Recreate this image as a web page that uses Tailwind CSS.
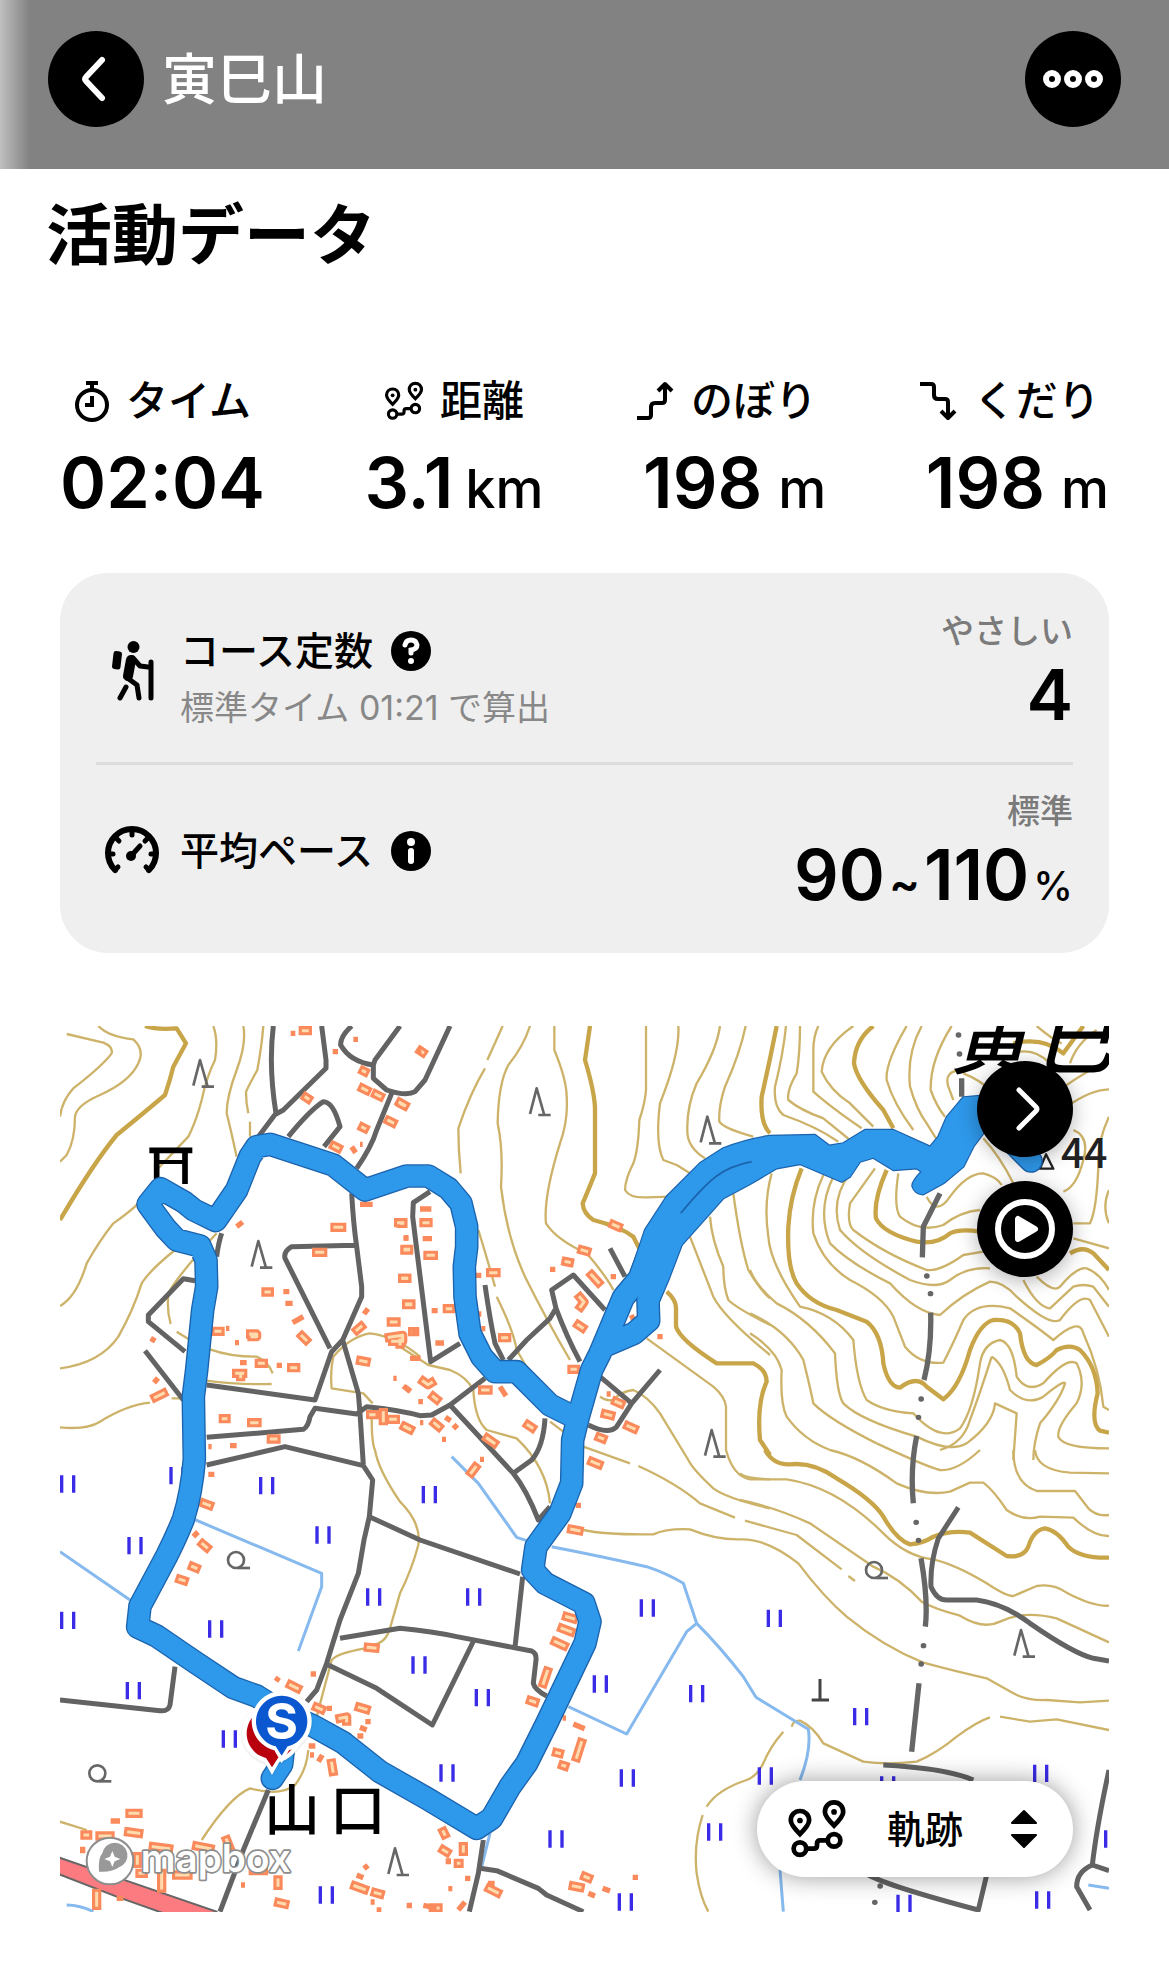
<!DOCTYPE html>
<html lang="ja">

<head>
    <meta charset="UTF-8">
    <meta name="viewport" content="width=device-width, initial-scale=1.0">
    <script src="https://cdn.jsdelivr.net/npm/@tailwindcss/browser@4"></script>
    <title>寅巳山 - 活動データ</title>
</head>

<body class="bg-white text-black font-['Inter','Noto_Sans_CJK_JP',sans-serif]">
    <!-- shared icon -->
    <svg class="hidden" aria-hidden="true">
        <symbol id="route" viewBox="0 0 190 188">
            <g fill="none" stroke="currentColor" stroke-width="15">
                <path d="M41 37c-17 0-29 13-29 30 0 14 16 30 29 43 13-13 29-29 29-43 0-17-12-30-29-30z" />
                <path d="M149 10c-17 0-29 13-29 30 0 14 16 30 29 43 13-13 29-29 29-43 0-17-12-30-29-30z" />
                <circle cx="41" cy="156" r="20" />
                <circle cx="149" cy="130" r="20" />
                <path d="M61 156H84Q95 156 95 147V141Q95 130 106 130H129" />
            </g>
            <circle cx="41" cy="67" r="9" fill="currentColor" />
            <circle cx="149" cy="40" r="9" fill="currentColor" />
        </symbol>
    </svg>

    <header class="flex items-center justify-between px-12 pt-[31px] pb-[42px] bg-linear-to-r from-[#c0c0c0] via-[#828282] via-[30px] to-[#828282]">
        <div class="flex items-center gap-[18px]">
            <button type="button" aria-label="戻る" class="size-24 rounded-full bg-black text-white flex items-center justify-center">
                <svg class="size-12" viewBox="0 0 48 48" fill="none" stroke="currentColor" stroke-width="6" stroke-linecap="round" stroke-linejoin="round">
                    <path d="M30 5L14 22Q12 24 14 26L30 43" />
                </svg>
            </button>
            <span class="text-[55px] leading-[76px] font-medium text-white">寅巳山</span>
        </div>
        <button type="button" aria-label="メニュー" class="size-24 rounded-full bg-black text-white flex items-center justify-center">
            <svg class="w-[60px] h-5" viewBox="0 0 60 20" fill="none" stroke="currentColor" stroke-width="6">
                <circle cx="9" cy="10" r="6" />
                <circle cx="30" cy="10" r="6" />
                <circle cx="51" cy="10" r="6" />
            </svg>
        </button>
    </header>

    <main class="pb-[58px]">
        <h1 class="px-[46px] mt-8 text-[66px] leading-[68px] font-bold">活動データ</h1>

        <!-- stats -->
        <dl class="flex justify-between px-[60px] mt-[108px] font-medium">
            <div>
                <dt class="flex items-center justify-center gap-4 text-[42px] leading-[48px]">
                    <svg class="w-9 h-11" viewBox="0 0 36 44" fill="none" stroke="currentColor" stroke-width="4">
                        <circle cx="18" cy="26" r="15" />
                        <path d="M12 4H24M18 4V10M18 17V26H11" />
                    </svg>
                    タイム
                </dt>
                <dd class="mt-4 text-[70px] leading-[84px] font-semibold whitespace-nowrap">02:04</dd>
            </div>
            <div>
                <dt class="flex items-center justify-center gap-4 text-[42px] leading-[48px]">
                    <svg class="size-10"><use href="#route" /></svg>
                    距離
                </dt>
                <dd class="mt-4 text-[70px] leading-[84px] font-semibold whitespace-nowrap">3.1<span class="ml-3 text-[54px] leading-none font-medium">km</span></dd>
            </div>
            <div>
                <dt class="flex items-center gap-4 text-[42px] leading-[48px]">
                    <svg class="size-10 -ml-2" viewBox="0 0 40 40" fill="none" stroke="currentColor" stroke-width="4" stroke-linejoin="round">
                        <path d="M2 37H13Q16 37 16 34V26Q16 22 20 22H27Q30 22 30 19V4M23 10L30 3L37 10" />
                    </svg>
                    のぼり
                </dt>
                <dd class="mt-4 text-[70px] leading-[84px] font-semibold whitespace-nowrap">198<span class="ml-4 text-[54px] leading-none font-medium">m</span></dd>
            </div>
            <div>
                <dt class="flex items-center gap-4 text-[42px] leading-[48px]">
                    <svg class="size-10 -ml-2" viewBox="0 0 40 40" fill="none" stroke="currentColor" stroke-width="4" stroke-linejoin="round">
                        <path d="M2 3H13Q16 3 16 6V14Q16 18 20 18H27Q30 18 30 21V36M23 30L30 37L37 30" />
                    </svg>
                    くだり
                </dt>
                <dd class="mt-4 text-[70px] leading-[84px] font-semibold whitespace-nowrap">198<span class="ml-4 text-[54px] leading-none font-medium">m</span></dd>
            </div>
        </dl>

        <!-- course card -->
        <section class="mx-[60px] mt-12 px-9 bg-[#efefef] rounded-[48px]">
            <div class="flex items-center pt-[34px] pb-[27px] border-b-3 border-[#dcdcdc]">
                <div class="w-[84px] pl-4">
                    <svg class="w-[42px] h-[60px]" viewBox="0 0 42 60" fill="none" stroke="currentColor" stroke-linecap="round" stroke-linejoin="round">
                        <circle cx="21.5" cy="6" r="6" fill="currentColor" stroke="none" />
                        <path d="M4 12.500L7.500 13L6 26L2.500 25.500Z" fill="currentColor" stroke-width="5" />
                        <path d="M19 19L16 35" stroke-width="10" />
                        <path d="M21 17L28 25L36 26" stroke-width="5" />
                        <path d="M39 21V57M14 36L25 44L27 57M14 46L8 57" stroke-width="5" />
                    </svg>
                </div>
                <div class="self-end">
                    <h2 class="flex items-center gap-[18px] text-[39px] leading-[60px] font-medium">
                        コース定数
                        <button type="button" aria-label="コース定数とは" class="size-10 rounded-full bg-black text-white flex items-center justify-center">
                            <svg class="size-7" viewBox="0 0 28 28" fill="none" stroke="currentColor" stroke-width="5" stroke-linecap="round">
                                <path d="M8 8Q9 3 14 3T20 8Q20 12 14 13V16" />
                                <circle cx="14" cy="24" r="3" fill="currentColor" stroke="none" />
                            </svg>
                        </button>
                    </h2>
                    <p class="text-[34px] leading-[54px] text-[#888]">標準タイム 01:21 で算出</p>
                </div>
                <div class="ml-auto text-right font-medium">
                    <p class="text-[33px] leading-[48px] text-[#7b7b7b]">やさしい</p>
                    <p class="text-[70px] leading-[80px] font-semibold">4</p>
                </div>
            </div>
            <div class="flex items-center pt-[22px] pb-[38px]">
                <div class="w-[84px] pl-2">
                    <svg class="w-[56px] h-[50px]" viewBox="0 0 56 50" fill="none" stroke="currentColor" stroke-width="5" stroke-linecap="round">
                        <path d="M11 44A24 24 0 1 1 45 44" stroke-width="6" />
                        <path d="M28 6V9M13 13L15 15M43 13L41 15M5 28H9M51 28H47M11 44L14 41M45 44L42 41" />
                        <path d="M27 30L36 20" />
                        <circle cx="27" cy="30" r="5" fill="currentColor" stroke="none" />
                    </svg>
                </div>
                <h2 class="flex items-center gap-[18px] text-[39px] leading-[60px] font-medium">
                    平均ペース
                    <button type="button" aria-label="平均ペースとは" class="size-10 rounded-full bg-black text-white flex items-center justify-center">
                        <svg class="size-7" viewBox="0 0 28 28" fill="currentColor">
                            <circle cx="14" cy="5" r="4" />
                            <rect x="11" y="11" width="6" height="16" rx="3" />
                        </svg>
                    </button>
                </h2>
                <div class="ml-auto text-right font-medium">
                    <p class="text-[33px] leading-[48px] text-[#7b7b7b]">標準</p>
                    <p class="text-[70px] leading-[80px] font-semibold">90<span class="mx-1 text-[46px] leading-none">~</span>110<span class="ml-1 text-[40px] leading-none font-medium">%</span></p>
                </div>
            </div>
        </section>

        <!-- map -->
        <section class="relative mx-[60px] mt-[73px]">
            <svg class="block w-full" viewBox="0 0 3147 2658" fill="none" stroke-linejoin="round">
                <defs>
                    <path id="tree" d="M-20 82L0 5L22 82M5 85H42" stroke="#666" stroke-width="8" />
                    <path id="field" d="M-18 -26V26M18 -26V26" stroke="#3a2ce6" stroke-width="10" />
                    <g id="leaf" stroke="#666" stroke-width="8">
                        <circle r="24" />
                        <path d="M5 24H42" />
                    </g>
                    <path id="pin" d="M0 127L-22 88A90 90 0 1 1 22 88Z" />
                </defs>

                <!-- contours -->
                <g stroke="#cdb36a" stroke-width="7">
                    <g transform="translate(-30 -48)">
                        <path d="M50 72L160 98Q190 110 185 130Q160 165 70 235Q35 275 30 320M145 48Q175 80 250 88Q285 120 265 160Q240 215 150 255Q80 285 75 320Q75 390 50 435L30 455M490 48Q505 90 495 150Q470 200 455 270Q440 330 415 380L320 480M580 48Q590 100 560 180Q530 260 530 310Q545 370 560 440M640 48Q635 110 622 180Q600 220 588 245Q588 280 595 310M600 335V380" />
                        <path d="M265 580Q240 605 190 640Q150 690 110 760Q80 860 30 888M375 720Q300 780 275 820Q250 900 205 980Q150 1060 30 1075M500 670Q380 800 355 850Q350 900 362 942M380 965L420 990M480 1018Q540 1040 620 1040Q655 1055 668 1090M470 1112Q560 1125 665 1122M30 1252Q110 1260 150 1235Q230 1185 300 1178M365 1165H390" />
                        <path d="M1110 1040Q1040 980 960 970Q900 980 850 1040Q840 1080 845 1135L940 1150L968 1180M965 1220Q965 1300 975 1320Q985 1380 1050 1475Q1115 1540 1105 1605Q1085 1680 1050 1750L1020 1855Q1010 1890 985 1900L945 1915Q860 1930 845 1950L800 2120M775 2220Q770 2280 735 2325Q690 2360 600 2335Q540 2360 455 2490M30 2435L110 2460" />
                    </g>
                    <g transform="translate(1020 -48)">
                        <path d="M308 48L262 150M255 175Q210 250 175 355Q175 420 182 490M390 48Q370 110 325 165Q295 220 293 340Q310 420 303 530Q320 680 375 800Q440 930 510 1050M463 48V120Q500 210 500 260Q505 330 480 400Q430 560 438 640Q470 690 560 730Q620 800 640 840M235 660Q260 740 285 830M290 860Q340 960 350 1020L385 1080M738 48V240Q735 280 718 330Q715 420 700 460Q675 510 675 540Q690 565 740 562L810 560M835 48Q840 130 780 280Q765 400 790 450L830 465L870 490M960 48Q950 120 890 220Q860 290 862 360Q860 410 915 445M1037 48Q1020 130 975 230Q955 290 958 335Q970 355 1060 380" />
                        <path d="M870 680L940 860Q970 920 1110 1035M930 620Q935 690 970 770Q970 830 985 870Q1010 895 1110 945M1000 550Q1020 700 1045 780Q1080 840 1110 865M740 985L940 1130Q975 1160 978 1190V1320Q1000 1400 1050 1408H1110M0 1010L85 1065L150 1080Q200 1100 220 1140Q225 1230 260 1260L350 1285Q440 1370 450 1480M600 1160Q620 1175 640 1170Q660 1145 700 1140Q745 1160 780 1210L865 1350Q880 1380 940 1435Q980 1465 1110 1495M450 1235L490 1265M550 1310L690 1360" />
                        <path d="M715 1368Q830 1420 900 1480L1005 1523M550 1560Q620 1575 760 1573Q800 1555 870 1558Q950 1590 1020 1588M1150 2165Q1110 2210 1090 2260Q1070 2300 1040 2310Q950 2340 920 2390M908 2415Q880 2500 890 2590Q900 2660 925 2705" />
                    </g>
                    <g transform="translate(2070 -48)">
                        <path d="M108 48Q100 130 75 230Q70 290 100 315Q200 350 265 395M150 48Q150 130 140 190Q110 240 115 270Q150 300 220 325L300 390M205 48Q190 80 190 120V245Q240 290 335 355M310 48Q220 110 215 185Q240 240 300 280L370 350M470 48Q405 160 410 210Q430 280 490 360M515 48Q470 130 480 230Q500 300 530 340L558 385M605 48Q540 150 542 240Q560 290 585 320M640 180Q580 180 595 230L610 270M860 48Q910 90 935 100M790 130Q850 110 900 160M960 160Q980 100 1040 60M640 190Q690 210 720 240M950 225Q1000 190 1077 150" />
                        <path d="M65 490Q40 580 55 680Q60 760 150 890Q250 910 310 990Q320 1120 350 1170Q400 1205 490 1210Q570 1300 630 1255Q670 1200 690 1060Q700 1000 750 990Q790 1000 800 1100Q830 1150 880 1120Q950 1040 980 1060Q1010 1120 980 1180Q920 1250 925 1280Q940 1315 1077 1315" />
                        <path d="M220 495Q180 580 190 670Q220 760 300 810Q400 860 430 920L465 1010Q510 1065 580 1058Q610 1000 640 930Q680 870 780 895Q860 950 910 990Q990 920 1000 970Q1050 1080 1060 1190L1077 1200" />
                        <path d="M250 500Q200 600 240 700Q300 760 420 820Q500 910 570 915Q640 850 720 815Q760 815 800 860Q900 950 930 930Q990 850 1020 870L1077 980M300 490Q240 570 270 660Q330 730 480 810Q560 840 600 810Q650 770 720 775M375 475L300 580Q290 640 310 660Q400 730 530 780Q570 785 640 735L700 725M445 490Q430 590 450 620Q510 670 580 645Q630 605 690 600M530 560Q560 620 600 560Q650 490 700 490Q740 500 755 525" />
                        <path d="M700 385Q750 440 790 520M950 290Q1020 240 1077 238M970 360Q1020 380 1000 450Q980 530 940 545M1077 320Q1040 400 1045 470Q1040 600 1020 640H970M1077 540Q1055 590 1077 640M970 685L1077 715M820 810Q860 890 900 895L970 830Q1000 820 1030 830L1077 890M860 800Q910 850 930 830Q980 770 1010 775Q1050 790 1077 840" />
                        <path d="M0 780Q20 830 80 880Q180 930 255 1030Q260 1150 280 1180Q330 1230 500 1280Q600 1330 650 1300Q730 1240 735 1180L800 1210L790 1350M0 910Q110 960 160 1050Q180 1130 190 1180Q240 1230 380 1300M0 970Q80 1020 95 1080Q90 1180 110 1220Q160 1290 240 1320M725 1040Q760 1060 780 1140Q830 1190 880 1160Q940 1110 945 1120Q930 1170 870 1240Q850 1300 850 1350M725 1040Q690 1150 660 1230Q640 1300 570 1320" />
                    </g>
                    <g transform="translate(2040 1272)">
                        <path d="M0 70Q20 90 140 88Q290 110 430 250Q500 320 580 328Q650 345 740 400Q800 440 820 438L890 408Q940 400 980 428Q1060 470 1107 467M0 150Q100 170 210 220L400 350Q480 385 545 455Q580 475 660 497Q730 540 780 515Q850 480 950 505L1107 577M15 212L170 255L305 358M325 378L345 393M0 268Q80 265 175 340Q250 440 320 500Q430 590 550 638Q650 665 740 685L820 730Q860 752 920 750L1020 757L1107 752" />
                        <path d="M270 0Q360 20 470 100Q560 140 630 125L690 98H730Q760 120 800 180Q850 215 900 200L1000 203Q1060 260 1107 258M410 -20Q560 50 600 60Q650 65 720 0M820 0Q820 100 890 123H1005L1045 175Q1070 200 1107 195M885 0Q890 60 990 68L1107 70M155 830Q160 810 180 812Q220 830 250 880L370 935Q440 945 530 935Q590 910 650 860Q710 815 750 802M780 800L870 815L950 808L1107 840" />
                    </g>
                </g>
                <g stroke="#c8a548" stroke-width="13">
                    <path transform="translate(-30 -48)" d="M285 48Q320 60 380 55L408 100L370 170Q360 210 345 255Q280 310 200 375Q130 460 30 630" />
                    <path transform="translate(1020 -48)" d="M570 48L555 150Q585 250 585 300V490Q565 540 548 580Q550 610 580 630Q660 650 700 680L720 720M800 845Q830 870 828 900V950Q840 990 950 1060H1060Q1100 1080 1100 1115Q1070 1180 1080 1290L1110 1335" />
                    <path transform="translate(2070 -48)" d="M80 48Q60 150 35 260Q30 340 60 370M370 48Q315 90 312 160Q320 210 400 300L430 355M155 475Q120 560 115 650Q110 770 140 820Q180 880 260 900L350 935Q395 970 400 1060Q415 1130 450 1133Q500 1095 530 1130L580 1168Q630 1130 660 1020Q690 940 730 930Q790 925 810 970Q820 1060 860 1065Q900 1045 920 1020Q960 1000 990 1020Q1040 1070 1043 1150Q1020 1240 1050 1262L1077 1268M410 480Q370 570 378 625Q400 670 500 695Q560 705 600 670Q630 655 690 665M960 730Q1000 705 1030 730L1077 780M790 100Q880 80 940 130L1000 48" />
                    <path transform="translate(2040 1272)" d="M75 0Q100 45 150 43Q220 35 290 85Q400 150 430 200Q470 270 510 283Q550 280 580 260Q630 240 690 248L800 318Q850 325 865 290Q880 240 915 235Q950 240 985 290Q1020 325 1107 323" />
                </g>

                <!-- water -->
                <g stroke="#86b9ee" stroke-width="9">
                    <path transform="translate(-30 1272)" d="M430 207L815 370V410L745 603M30 305L240 450M50 1365Q90 1365 130 1385" />
                    <path transform="translate(1020 1272)" d="M155 20L235 100L350 262L380 272M455 290Q610 320 740 350Q800 370 850 400L890 520L860 545L680 852L505 770M890 520Q960 590 1030 680L1068 742L1225 838Q1235 900 1200 990M1140 1260L1150 1385M270 1150L245 1250M2065 1305L2127 1315" />
                </g>

                <!-- roads -->
                <path transform="translate(-30 1272)" d="M20 1220L150 1265L500 1385V1400H370L200 1340L20 1270Z" fill="#fb7b80" stroke="#666" stroke-width="6" />
                <g stroke="#636363" stroke-width="15">
                    <path transform="translate(-30 -48)" d="M670 48Q655 170 678 310L625 380M815 48L828 150V175L700 300L678 312M715 380Q780 300 820 275Q850 275 870 350L822 410M905 48Q870 80 872 105Q900 155 970 165L975 150L1050 48M970 165V205L1010 240Q1070 260 1095 245L1125 210L1200 48M1025 250L980 360Q965 410 920 475M905 550Q910 640 920 710L935 830V860L878 990L845 1025L795 1170L470 1125M915 706L725 710Q700 725 705 745L840 1015M878 990L925 1150L930 1210L940 1365M470 1282L760 1258Q775 1250 780 1220L795 1195L920 1212L950 1190Q1050 1200 1110 1217L1145 1215L1200 1185M515 670Q505 700 500 740M435 812L400 806L295 915V935L405 1025M285 1022L400 1170M470 1365L705 1310L940 1367L968 1410L958 1520L942 1590L925 1690L870 1830L830 1960L800 2040L770 2075" />
                    <path transform="translate(1020 -48)" d="M90 545L40 578L38 620L92 1055L180 1000M255 825Q270 930 285 1000L310 1050M325 1050L380 990L450 925L468 895L455 840L520 795L615 900M468 895Q500 980 540 1055M630 715L675 800M600 1100L695 1180L780 1080M695 1180L650 1250Q625 1275 565 1245M255 1105L150 1185L340 1390Q380 1440 415 1530L450 1490M435 1225Q430 1310 395 1350L340 1390" />
                    <path transform="translate(-30 1272)" d="M958 200L1110 270L1410 372M870 565L1050 535Q1150 545 1220 560L1445 603Q1460 610 1458 630L1450 700Q1455 720 1490 738M1418 380L1395 592M1272 570L1147 825L980 715L835 645M375 650L360 765Q355 785 330 782L30 750M655 1020L580 1200L510 1385M1300 1170L1285 1270L1258 1385M1290 1255L1340 1262L1465 1315L1490 1335L1600 1385" />
                    <path transform="translate(2040 1272)" d="M655 172L595 265Q570 340 573 410Q590 450 620 450H710Q790 460 870 520Q1000 610 1060 625L1107 633M430 945Q620 955 700 990M385 1275Q450 1310 715 1380L740 1275M1107 960Q1070 1130 1057 1245L1107 1262M1057 1245Q1010 1265 1010 1310L1050 1380" />
                </g>
                <!-- boundary -->
                <g stroke="#666" stroke-width="16">
                    <path d="M2640 502L2590 602L2587 694M2612 860Q2615 972 2592 1062M2570 1230Q2550 1330 2560 1432M2583 1597Q2605 1722 2596 1802M2577 1972L2555 2177M2705 157V212" />
                    <path stroke-linecap="round" d="M2600 750h1M2611 803h1M2583 1119h1M2575 1174h1M2695 27h1M2698 84h1M2568 1489h1M2575 1543h1M2590 1859h1M2583 1914h1M2444 2629h1M2460 2580h1" />
                </g>

                <!-- buildings: short strokes, light core drawn on top -->
                <defs>
                    <g id="houses">
                        <path transform="translate(-30 -48)" d="M760 62h12M768 262l6 4M940 183l4 2M938 235l12 6M978 253l12 6M1050 278l14 8M1016 332l12 6M938 352l6 3M852 408l12 6M855 652h20M1046 638h12M1066 718h10M800 727h18M1060 805h10M1070 882h12M648 846h10M498 964h12M602 972h18v8h-14M756 978l12 12M921 960l12-10M932 1052l16 3M1018 982l40-6v18h-30M560 1090h18M572 1094v6M628 1060h12M725 1073h12M316 1162l24-12M520 1226h8M605 1238h16M664 1287h14M962 1214h10M1000 1208v24M1022 1228h14M1068 1252l12 6M1024 936h14" />
                        <path transform="translate(1020 -48)" d="M4 282l8 4M62 123l6 4M4 640h4M72 638h12M15 720h10M84 736h16M8 805h12M20 884h12M142 896h10M38 965h6M0 990v12M308 983h12M272 788h16M640 644l14 6M546 720l14 4M498 755l10 2M575 795l20 22M540 862l12 14l-10 14M535 945l12 8M516 1078h10M70 1114l14 10l10-6M248 1140h16M384 1245l12 8M648 1175l14 6M616 1212l16 4M684 1248l18 8M598 1282l10 4M262 1285l20 14M100 1160l10 8M104 1240l12 10M14 1250l12 6M576 1355l20 8M214 1388l12-16M515 1558l22 4" />
                        <path transform="translate(-30 1272)" d="M462 160l16 6M458 282l12 10M428 350l10 4M390 388l12 4M955 592l20 2M722 705l20 10M800 772l14 6M870 805l20-4v12M928 772l20 6M845 940l4 24M240 1090h24M236 1146l30 4M105 1155h8M150 1158h30M310 1190l46 6M440 1188l40 8M530 1170l8 20M262 1220v20M270 1270h10M335 1270v44M140 1330v36M380 1275h34M610 1262h30M684 1290v16M686 1358l18 4M915 1308l28 10M976 1328l14 4" />
                        <path transform="translate(1020 1272)" d="M500 500l20 6M486 535l26 10M466 575l26 12M430 700l12-36M392 752l12 4M470 908l8 2M488 946l6 2M530 922l14-44M130 1145l4 8M130 1200l10 6M190 1190v14M268 1316l24 12M520 1308l20 4M555 1280l10 4M175 1240h2M100 1374h14" />
                    </g>
                </defs>
                <use href="#houses" stroke="#fa8a5c" stroke-width="28" stroke-linecap="square" />
                <use href="#houses" stroke="#ffdcae" stroke-width="9" stroke-linecap="square" />
                <g stroke="#fa8a5c" stroke-width="16">
                    <path transform="translate(-30 -48)" d="M722 70h14M910 88h14M848 125h16M1104 125h10M905 410l12 18M930 403h8M560 650l18-14M930 583h38M1062 684h14M700 845h18M706 880h22M728 938l32-18M942 912l12-16M555 998h12M528 955h10M570 1058h20M680 1066h16M302 985l14 8M312 1118l12-14M475 1310h10M540 1307h20M1030 1105h10M1064 1130l18 14M1084 1045h26M1084 964h16" />
                    <path transform="translate(1020 -48)" d="M60 597h34M68 686h28M10 684h14M450 778h16M632 800h16M772 980h16M95 902h18M106 999h26M30 1045h32M228 796h16M236 912h8M244 956h12M10 1128l20 16M55 1175h14M60 1238h10M136 1222l16 10M160 1256l12-12M126 1288h12M300 1130l18 28M690 925l14-6M620 1152h12M535 1478v16M240 1348h12" />
                    <path transform="translate(-30 1272)" d="M475 73h18M430 260l14-14M678 694l8-12M782 672h16M830 775h16M946 815h16M930 832l20 8M922 858h18M776 888h20M780 915h12M805 935l12-20M182 1113h28M200 1345h20M98 1190v20M573 1305h12M920 1275l20 8M942 1256l12-10M962 1356h12M980 1380h14M1070 1367h16" />
                    <path transform="translate(1020 1272)" d="M488 804h10M520 822l34 14M195 1285h16M145 1316h12M264 1300h20M565 1330l20 8M608 1315l22 8M698 1282h16M22 1366h14M70 1366l40 8M175 1380l20-24M145 1225v18" />
                </g>

                <!-- land use symbols -->
                <g>
                    <use href="#tree" x="420" y="97" /><use href="#tree" x="595" y="640" /><use href="#tree" x="1430" y="182" />
                    <use href="#tree" x="1942" y="267" /><use href="#tree" x="1955" y="1207" /><use href="#tree" x="1005" y="2462" />
                    <use href="#tree" x="2883" y="1807" />
                    <use href="#leaf" x="528" y="1602" /><use href="#leaf" x="112" y="2242" /><use href="#leaf" x="2442" y="1632" />
                    <path d="M2280 1959V2022M2255 2022H2307" stroke="#444" stroke-width="9" />
                    <use href="#field" x="23" y="1374" /><use href="#field" x="351" y="1349" /><use href="#field" x="620" y="1379" />
                    <use href="#field" x="225" y="1559" /><use href="#field" x="789" y="1527" /><use href="#field" x="23" y="1783" />
                    <use href="#field" x="941" y="1713" /><use href="#field" x="467" y="1809" /><use href="#field" x="220" y="1994" />
                    <use href="#field" x="508" y="2139" /><use href="#field" x="799" y="2607" /><use href="#field" x="1108" y="1406" />
                    <use href="#field" x="1241" y="1713" /><use href="#field" x="1762" y="1746" /><use href="#field" x="1077" y="1917" />
                    <use href="#field" x="1621" y="1974" /><use href="#field" x="1267" y="2015" /><use href="#field" x="1910" y="2003" />
                    <use href="#field" x="1161" y="2241" /><use href="#field" x="1702" y="2256" /><use href="#field" x="1964" y="2418" />
                    <use href="#field" x="1488" y="2439" /><use href="#field" x="1696" y="2628" /><use href="#field" x="2143" y="1777" />
                    <use href="#field" x="2402" y="2072" /><use href="#field" x="2116" y="2250" /><use href="#field" x="2483" y="2277" />
                    <use href="#field" x="2942" y="2242" /><use href="#field" x="2948" y="2622" /><use href="#field" x="2532" y="2632" />
                    <use href="#field" x="3155" y="2439" />
                </g>
                <path d="M268 373H397M290 372V460M375 372V474" stroke="#000" stroke-width="17" />
                <path d="M290 408H375" stroke="#000" stroke-width="12" />
                <path d="M2940 428H2980L2958 385Z" stroke="#222" stroke-width="7" />

                <g fill="#000" class="font-['Noto_Sans_CJK_JP',sans-serif]">
                    <text x="2672" y="126" font-size="236" font-style="italic" font-weight="500">寅</text>
                    <text x="2925" y="126" font-size="236" font-style="italic" font-weight="500">巳</text>
                    <text x="612" y="2412" font-size="168" font-weight="500">山</text>
                    <text x="809" y="2412" font-size="168" font-weight="500">口</text>
                    <text x="3003" y="427" font-size="122" font-weight="500" fill="#222">44</text>
                </g>

                <!-- track -->
                <defs>
                    <path id="trackLine" d="M637 2257L665 2215L680 2080M850 2150L760 2100L670 2060L590 2010L520 1985L400 1905L290 1830L233 1803L240 1740L320 1590Q350 1530 370 1480Q395 1400 403 1300L400 1112L410 1032L428 852L440 782L438 702L420 660L350 642L318 608L264 535L302 488L372 528L402 552L467 584L530 492L570 392L590 362L630 355L820 417L915 492L1040 450H1105L1165 487L1203 532L1220 602V662L1213 722L1215 812L1230 922L1265 992L1305 1037H1370L1470 1137L1530 1167M850 2150L960 2237L1100 2317L1250 2407L1295 2377L1350 2282L1400 2212L1460 2092L1575 1852L1590 1787L1572 1732L1455 1672L1418 1632L1428 1562L1500 1462L1535 1372L1538 1242L1555 1172L1595 1032L1620 982L1690 815L1738 757L1787 627L1848 532M1640 957L1722 922L1766 884L1764 822L1792 752M2770 260L2913 405" />
                    <path id="trackWide" d="M1710 747L1755 612L1820 512L1920 412L1990 367Q2060 340 2130 330L2265 327L2308 359L2350 352L2415 312H2500L2610 362L2635 332L2660 274L2710 214L2770 209V322L2740 362L2710 422L2650 472L2590 505Q2565 505 2557 480Q2557 465 2585 437L2570 427L2500 432L2440 395L2400 407L2370 452L2345 467L2220 414L2150 427L2070 474L1990 517L1865 657L1825 762L1795 832L1762 810Z" />
                </defs>
                <g stroke="#1c63ad" stroke-linecap="round">
                    <use href="#trackLine" stroke-width="71" />
                    <use href="#trackWide" stroke-width="7" />
                </g>
                <g stroke="#2e98ea" stroke-linecap="round">
                    <use href="#trackLine" stroke-width="63" />
                    <use href="#trackWide" fill="#2e98ea" stroke="none" />
                </g>
                <path d="M1862 562Q1930 480 1970 450Q2010 420 2075 407" stroke="#1c63ad" stroke-width="5" />

                <!-- pins -->
                <g class="drop-shadow-md">
                    <g transform="translate(636 2120)">
                        <use href="#pin" fill="#fff" />
                        <path d="M0 104L-18 76A76 76 0 1 1 18 76Z" fill="#b8000f" />
                    </g>
                    <g transform="translate(665 2085)">
                        <use href="#pin" fill="#fff" />
                        <path d="M0 104L-18 76A77 77 0 1 1 18 76Z" fill="#0b57d0" />
                    </g>
                </g>
                <text x="665" y="2139" text-anchor="middle" font-size="150" font-weight="700" fill="#fff">S</text>

                <!-- mapbox logo -->
                <g stroke="#8d8d8d" stroke-width="6">
                    <circle cx="150" cy="2505" r="70" fill="#fff" />
                    <path d="M117 2537Q114 2495 127 2482A38 38 0 1 1 177 2524Q155 2540 117 2537Z" fill="#999" stroke="none" />
                    <path d="M157 2475L164 2492L181 2499L164 2506L157 2523L150 2506L133 2499L150 2492Z" fill="#fff" stroke="none" />
                    <text x="242" y="2538" font-size="116" font-weight="600" fill="#fff" stroke-width="10" paint-order="stroke">mapbox</text>
                </g>
            </svg>

            <div class="absolute top-[35px] right-9 flex flex-col gap-6">
                <button type="button" aria-label="次へ" class="size-24 rounded-full bg-black text-white shadow-[0_4px_20px_rgba(0,0,0,0.3)] flex items-center justify-center">
                    <svg class="size-12" viewBox="0 0 48 48" fill="none" stroke="currentColor" stroke-width="5" stroke-linecap="round" stroke-linejoin="round">
                        <path d="M18 5L35 22Q37 24 35 26L18 43" />
                    </svg>
                </button>
                <button type="button" aria-label="再生" class="size-24 rounded-full bg-black text-white shadow-[0_4px_20px_rgba(0,0,0,0.3)] flex items-center justify-center">
                    <svg class="size-[60px]" viewBox="0 0 60 60" fill="none" stroke="currentColor">
                        <circle cx="30" cy="30" r="27" stroke-width="6" />
                        <path d="M23 20V40L40 30Z" fill="currentColor" stroke-width="6" stroke-linejoin="round" />
                    </svg>
                </button>
            </div>

            <label class="absolute bottom-[35px] right-9 h-24 pl-[30px] pr-9 flex items-center bg-white rounded-full shadow-[0_0_24px_rgba(0,0,0,0.4)]">
                <svg class="size-[60px]"><use href="#route" /></svg>
                <select aria-label="表示" class="appearance-none w-[76px] ml-10 mr-12 text-[38px] leading-[56px] font-medium bg-transparent">
                    <option>軌跡</option>
                </select>
                <svg class="w-[26px] h-10" viewBox="0 0 26 40" fill="currentColor" stroke="currentColor" stroke-width="2" stroke-linejoin="round">
                    <path d="M13 2L25 14H1ZM13 38L1 26H25Z" />
                </svg>
            </label>
        </section>
    </main>
</body>

</html>
